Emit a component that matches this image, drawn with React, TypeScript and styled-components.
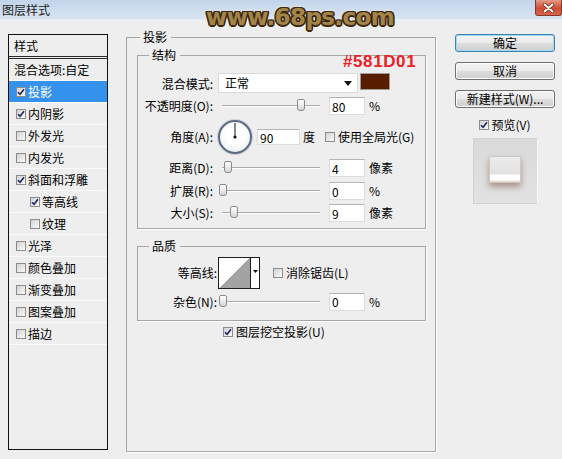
import React from "react";
import styled, { createGlobalStyle } from "styled-components";

const GlobalStyle = createGlobalStyle`
  html, body {
    margin: 0;
    padding: 0;
    background: #eeeeee;
  }
  body {
    font-family: "Noto Sans CJK SC", "Noto Sans", sans-serif;
    font-size: 12px;
    line-height: 14px;
    color: #000;
    overflow: hidden;
  }
`;

const Dialog = styled.div`
  position: relative;
  width: 562px;
  height: 459px;
  background: #eeeeee;
  overflow: hidden;
`;

const TitleBar = styled.div`
  height: 20px;
  box-sizing: border-box;
  display: flex;
  align-items: center;
  justify-content: space-between;
  padding-left: 2px;
  background: linear-gradient(#c2d5ea, #d8e4f1);
  border-bottom: 1px solid #e6edf5;
`;

const Title = styled.span`
  font-size: 12px;
  color: #222;
`;

const CloseButton = styled.div`
  align-self: flex-start;
  width: 27px;
  height: 16px;
  box-sizing: border-box;
  display: flex;
  align-items: center;
  justify-content: center;
  border: 1px solid #8a3527;
  border-top: none;
  border-radius: 0 0 3px 3px;
  background: linear-gradient(#e49a85, #cf4c33 55%, #d8664c);
`;

const Watermark = styled.div`
  position: absolute;
  left: 206px;
  top: 3px;
  font-family: "DejaVu Sans", sans-serif;
  font-weight: bold;
  font-size: 23px;
  line-height: 28px;
  letter-spacing: -0.6px;
  color: #a5844a;
  text-shadow: 1.5px 0 0 #3a2812, -1.5px 0 0 #3a2812, 0 1.5px 0 #3a2812,
    0 -1.5px 0 #3a2812, 1.2px 1.2px 0 #3a2812, -1.2px -1.2px 0 #3a2812,
    1.2px -1.2px 0 #3a2812, -1.2px 1.2px 0 #3a2812, 0 0 4px #f4efe2,
    0 0 4px #f4efe2;
`;

const Body = styled.div`
  display: flex;
  align-items: flex-start;
  padding: 10px 0 0 8px;
`;

/* ---------- style list ---------- */

const StyleList = styled.div`
  width: 100px;
  height: 416px;
  margin-top: 4px;
  box-sizing: border-box;
  border: 1px solid #111;
  flex-shrink: 0;
`;

const ListHeader = styled.div`
  height: 21px;
  line-height: 21px;
  padding-left: 5px;
  border-bottom: 3px double #2a2a2a;
`;

const ListItem = styled.div<{ $indent: number; $selected?: boolean }>`
  height: 21px;
  display: flex;
  align-items: center;
  gap: 2px;
  padding-left: ${(p) => p.$indent}px;
  border-bottom: 1px solid #fbfbfb;
  background: ${(p) => (p.$selected ? "#3592ec" : "transparent")};
  color: ${(p) => (p.$selected ? "#fff" : "#000")};
`;

const Box = styled.span`
  width: 10px;
  height: 10px;
  box-sizing: border-box;
  flex-shrink: 0;
  display: inline-flex;
  align-items: center;
  justify-content: center;
  border: 1px solid #8c8c8c;
  background: linear-gradient(135deg, #d2d2d2, #fafafa);
`;

const Check = ({ checked }: { checked?: boolean }) => (
  <Box>
    {checked && (
      <svg width="8" height="8" viewBox="0 0 8 8">
        <path
          d="M1 4.2 L3.1 6.3 L7 1.3"
          fill="none"
          stroke="#1d2760"
          strokeWidth="1.6"
        />
      </svg>
    )}
  </Box>
);

const items = [
  { label: "混合选项:自定", box: false },
  { label: "投影", checked: true, selected: true },
  { label: "内阴影", checked: true },
  { label: "外发光" },
  { label: "内发光" },
  { label: "斜面和浮雕", checked: true },
  { label: "等高线", checked: true, sub: true },
  { label: "纹理", sub: true },
  { label: "光泽" },
  { label: "颜色叠加" },
  { label: "渐变叠加" },
  { label: "图案叠加" },
  { label: "描边" },
];

/* ---------- settings ---------- */

const Group = styled.fieldset<{ $h?: number; $pad: string }>`
  margin: 0;
  min-width: 0;
  position: relative;
  box-sizing: border-box;
  ${(p) => (p.$h ? `height: ${p.$h}px;` : "")}
  padding: ${(p) => p.$pad};
  border: 1px solid #a6a6a6;
  box-shadow: 1px 1px 0 #ffffff;
`;

const Legend = styled.legend<{ $indent: number }>`
  margin-left: ${(p) => p.$indent}px;
  padding: 0 4px 0 3px;
  line-height: 14px;
`;

const MainPanel = styled(Group)`
  width: 310px;
  margin-left: 18px;
  flex-shrink: 0;
`;

const SubGroup = styled(Group)<{ $mt?: number }>`
  width: 289px;
  margin-top: ${(p) => p.$mt || 0}px;
`;

const HexNote = styled.div`
  position: absolute;
  left: 205px;
  top: -9px;
  font-family: "Liberation Sans", Arial, sans-serif;
  font-weight: bold;
  font-size: 17px;
  line-height: 18px;
  letter-spacing: 0.6px;
  color: #e8222b;
`;

const Row = styled.div<{ $h: number }>`
  height: ${(p) => p.$h}px;
  display: flex;
  align-items: center;
`;

const Label = styled.span<{ $w?: number; $gap?: number }>`
  width: ${(p) => p.$w || 75}px;
  margin-right: ${(p) => (p.$gap === undefined ? 5 : p.$gap)}px;
  text-align: right;
  white-space: nowrap;
  flex-shrink: 0;
`;

const Select = styled.div`
  width: 140px;
  height: 20px;
  box-sizing: border-box;
  display: flex;
  align-items: center;
  justify-content: space-between;
  padding: 0 5px 0 6px;
  background: #fff;
  border: 1px solid #dadada;
  align-self: flex-start;
`;

const Swatch = styled.div<{ $color: string }>`
  width: 30px;
  height: 17px;
  margin-left: 2px;
  box-sizing: border-box;
  align-self: flex-start;
  background: ${(p) => p.$color};
  border: 1px solid #9a9a9a;
`;

const Slider = styled.div`
  position: relative;
  width: 104px;
  height: 14px;
  flex-shrink: 0;
  &::before {
    content: "";
    position: absolute;
    left: 4px;
    right: 2px;
    top: 6px;
    height: 1px;
    background: #a9a9a9;
    border-bottom: 1px solid #fff;
  }
`;

const Thumb = styled.span<{ $pos: number }>`
  position: absolute;
  left: ${(p) => p.$pos}px;
  top: 0;
  width: 8px;
  height: 12px;
  box-sizing: border-box;
  border: 1px solid #8a8a8a;
  border-radius: 2px 2px 3px 3px;
  background: linear-gradient(#ffffff, #d6d6d6);
`;

const Field = styled.input<{ $w?: number; $h?: number; $ml?: number }>`
  width: ${(p) => p.$w || 36}px;
  height: ${(p) => p.$h || 18}px;
  box-sizing: border-box;
  margin: 0 0 0 ${(p) => p.$ml || 7}px;
  padding: 0 0 0 2px;
  font: inherit;
  color: #000;
  background: #fff;
  border: 1px solid #dcdcdc;
  border-top-color: #b4b4b4;
  outline: none;
  flex-shrink: 0;
`;

const Unit = styled.span<{ $ml?: number }>`
  margin-left: ${(p) => (p.$ml === undefined ? 4 : p.$ml)}px;
  white-space: nowrap;
`;

const Dial = styled.div`
  width: 34px;
  height: 34px;
  box-sizing: border-box;
  border-radius: 50%;
  border: 2px solid #5c6a80;
  background: radial-gradient(circle at 50% 40%, #ffffff 40%, #e3e7ee);
  box-shadow: 0 0 0 1px #c9d0da;
  flex-shrink: 0;
`;

const CheckLabel = styled.label<{ $ml?: number }>`
  display: inline-flex;
  align-items: center;
  gap: 3px;
  margin-left: ${(p) => p.$ml || 0}px;
  white-space: nowrap;
`;

const Contour = styled.div`
  width: 42px;
  height: 32px;
  box-sizing: border-box;
  display: flex;
  border: 1px solid #1e1e1e;
  background: #fff;
  flex-shrink: 0;
`;

const ContourCurve = styled.div`
  width: 31px;
  border-right: 1px solid #1e1e1e;
  background: linear-gradient(to top left, #a3a3a3 50%, #ffffff 50%);
`;

const ContourArrow = styled.div`
  flex: 1;
  display: flex;
  align-items: center;
  justify-content: center;
  padding-bottom: 4px;
`;

const KnockoutRow = styled.div`
  height: 14px;
  margin-top: 4px;
  padding-left: 86px;
  display: flex;
  align-items: center;
`;

/* ---------- right column ---------- */

const Side = styled.div`
  width: 100px;
  margin: 4px 0 0 19px;
  display: flex;
  flex-direction: column;
  align-items: center;
  flex-shrink: 0;
`;

const Button = styled.button<{ $primary?: boolean }>`
  width: 100px;
  height: 18px;
  margin: 0 0 10px;
  padding: 0;
  font: inherit;
  color: #000;
  border-radius: 3px;
  border: 1px solid ${(p) => (p.$primary ? "#3c7fb1" : "#707070")};
  box-shadow: ${(p) => (p.$primary ? "inset 0 0 0 1px #9fdcf4" : "inset 0 0 0 1px #fbfbfb")};
  background: linear-gradient(#f3f3f3, #ebebeb 50%, #dddddd 51%, #cfcfcf);
`;

const PreviewToggle = styled(CheckLabel)`
  height: 14px;
  gap: 2px;
`;

const Preview = styled.div`
  width: 65px;
  height: 66px;
  margin-top: 6px;
  box-sizing: border-box;
  display: flex;
  align-items: center;
  justify-content: center;
  padding-bottom: 3px;
  border: 1px solid #d2d2d2;
  border-right-color: #f8f8f8;
  background: linear-gradient(#d9d9d9, #e2e2e2);
`;

const PreviewSwatch = styled.div`
  width: 32px;
  height: 27px;
  box-sizing: border-box;
  border: 1px solid #cfc8c0;
  background: linear-gradient(
    #ececec 0,
    #e2e2e2 68%,
    #ffffff 72%,
    #ffffff 92%,
    #d9cfc6 100%
  );
  box-shadow: 0 4px 6px rgba(88, 29, 1, 0.38);
`;

const sliders = [
  { label: "距离(D):", pos: 6, value: "4", unit: "像素", h: 24 },
  { label: "扩展(R):", pos: 1, value: "0", unit: "%", h: 22 },
  { label: "大小(S):", pos: 12, value: "9", unit: "像素", h: 22 },
];

const App = () => {
  return (
    <Dialog>
      <GlobalStyle />
      <TitleBar>
        <Title>图层样式</Title>
        <CloseButton>
          <svg width="13" height="10" viewBox="0 0 13 10">
            <path
              d="M2.5 1.5 L10.5 8.5 M10.5 1.5 L2.5 8.5"
              stroke="#6b2418"
              strokeWidth="3.4"
              strokeLinecap="round"
            />
            <path
              d="M2.5 1.5 L10.5 8.5 M10.5 1.5 L2.5 8.5"
              stroke="#ffffff"
              strokeWidth="2"
              strokeLinecap="round"
            />
          </svg>
        </CloseButton>
      </TitleBar>
      <Watermark>www.68ps.com</Watermark>

      <Body>
        <StyleList>
          <ListHeader>样式</ListHeader>
          {items.map((it) => (
            <ListItem
              key={it.label}
              $indent={it.box === false ? 5 : it.sub ? 21 : 7}
              $selected={it.selected}
            >
              {it.box !== false && <Check checked={it.checked} />}
              {it.label}
            </ListItem>
          ))}
        </StyleList>

        <MainPanel $h={422} $pad="4px 9px 0 10px">
          <Legend $indent={3}>投影</Legend>

          <SubGroup $pad="11px 0 4px 0">
            <Legend $indent={11}>结构</Legend>
            <HexNote>#581D01</HexNote>
            <Row $h={21}>
              <Label>混合模式:</Label>
              <Select>
                正常
                <svg width="8" height="5" viewBox="0 0 8 5">
                  <path d="M0 0 H8 L4 5 Z" fill="#111" />
                </svg>
              </Select>
              <Swatch $color="#581d01" />
            </Row>
            <Row $h={24}>
              <Label>不透明度(O):</Label>
              <Slider>
                <Thumb $pos={79} />
              </Slider>
              <Field readOnly value="80" />
              <Unit>%</Unit>
            </Row>
            <Row $h={38}>
              <Label>角度(A):</Label>
              <Dial>
                <svg width="30" height="30" viewBox="0 0 30 30">
                  <line x1="15" y1="15" x2="15" y2="1" stroke="#111" strokeWidth="1" />
                  <circle cx="15" cy="15" r="1.6" fill="#111" />
                </svg>
              </Dial>
              <Field readOnly value="90" $w={43} $h={16} $ml={5} />
              <Unit $ml={3}>度</Unit>
              <CheckLabel $ml={10}>
                <Check />
                使用全局光(G)
              </CheckLabel>
            </Row>
            {sliders.map((s) => (
              <Row $h={s.h} key={s.label}>
                <Label>{s.label}</Label>
                <Slider>
                  <Thumb $pos={s.pos} />
                </Slider>
                <Field readOnly value={s.value} />
                <Unit>{s.unit}</Unit>
              </Row>
            ))}
          </SubGroup>

          <SubGroup $mt={10} $pad="3px 0 7px 0">
            <Legend $indent={11}>品质</Legend>
            <Row $h={34}>
              <Label $w={79} $gap={1}>
                等高线:
              </Label>
              <Contour>
                <ContourCurve />
                <ContourArrow>
                  <svg width="5" height="3" viewBox="0 0 5 3">
                    <path d="M0 0 H5 L2.5 3 Z" fill="#111" />
                  </svg>
                </ContourArrow>
              </Contour>
              <CheckLabel $ml={13}>
                <Check />
                消除锯齿(L)
              </CheckLabel>
            </Row>
            <Row $h={23}>
              <Label $w={79} $gap={1}>
                杂色(N):
              </Label>
              <Slider>
                <Thumb $pos={1} />
              </Slider>
              <Field readOnly value="0" />
              <Unit>%</Unit>
            </Row>
          </SubGroup>

          <KnockoutRow>
            <CheckLabel>
              <Check checked />
              图层挖空投影(U)
            </CheckLabel>
          </KnockoutRow>
        </MainPanel>

        <Side>
          <Button $primary>确定</Button>
          <Button>取消</Button>
          <Button>新建样式(W)...</Button>
          <PreviewToggle>
            <Check checked />
            预览(V)
          </PreviewToggle>
          <Preview>
            <PreviewSwatch />
          </Preview>
        </Side>
      </Body>
    </Dialog>
  );
};

export default App;
